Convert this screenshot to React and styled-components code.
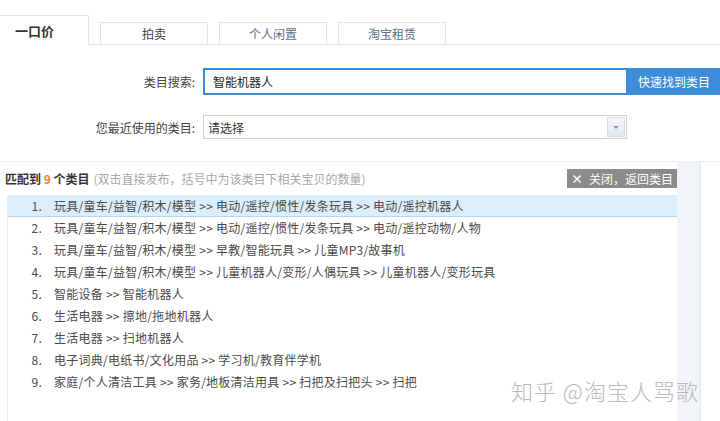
import React from "react";
import styled, { createGlobalStyle } from "styled-components";

const GlobalStyle = createGlobalStyle`
    body {
        margin: 0;
        background: #fff;
        font-family: "Noto Sans CJK SC", "Microsoft YaHei", sans-serif;
        font-size: 12px;
        color: #333;
    }
`;

const Page = styled.div`
    position: relative;
    width: 720px;
    height: 421px;
    overflow: hidden;
    background: #fff;
`;

const TabBar = styled.div`
    display: flex;
    align-items: flex-end;
    height: 45px;
    border-bottom: 1px solid #e3e3e3;
    box-sizing: border-box;
`;

const Tab = styled.div`
    box-sizing: border-box;
    display: flex;
    align-items: center;
    justify-content: ${p => (p.active ? "flex-start" : "center")};
    width: ${p => (p.active ? "89px" : "108px")};
    height: ${p => (p.active ? "30px" : "23px")};
    margin-left: ${p => (p.active ? "0" : "11px")};
    margin-bottom: -1px;
    padding-left: ${p => (p.active ? "15px" : "0")};
    border: 1px solid #e3e3e3;
    border-left: ${p => (p.active ? "none" : "1px solid #e3e3e3")};
    border-bottom: ${p => (p.active ? "1px solid #fff" : "1px solid #e3e3e3")};
    background: #fff;
    font-size: ${p => (p.active ? "13px" : "12px")};
    font-weight: ${p => (p.active ? "bold" : "normal")};
    color: ${p => p.color || "#333"};
`;

const Form = styled.div`
    display: flex;
    flex-direction: column;
    gap: 20px;
    padding-top: 23px;
    height: 116px;
    box-sizing: border-box;
`;

const Row = styled.div`
    display: flex;
    align-items: center;
`;

const Label = styled.div`
    width: 195px;
    margin-right: 8px;
    text-align: right;
    color: #444;
`;

const SearchInput = styled.div`
    box-sizing: border-box;
    width: 425px;
    height: 27px;
    border: 2px solid #3b8bd6;
    padding-left: 8px;
    display: flex;
    align-items: center;
    color: #222;
`;

const SearchButton = styled.div`
    width: 92px;
    height: 27px;
    background: #3d8ddb;
    color: #fff;
    display: flex;
    align-items: center;
    justify-content: center;
`;

const Select = styled.div`
    box-sizing: border-box;
    width: 424px;
    height: 24px;
    border: 1px solid #cfcfcf;
    padding-left: 4px;
    display: flex;
    align-items: center;
    justify-content: space-between;
    color: #333;
`;

const SelectArrow = styled.div`
    box-sizing: border-box;
    width: 18px;
    height: 20px;
    margin-right: 1px;
    border: 1px solid #d6dde6;
    background: linear-gradient(#f4f7fa, #dde5ee);
    display: flex;
    align-items: center;
    justify-content: center;
    &::after {
        content: "";
        border-left: 3px solid transparent;
        border-right: 3px solid transparent;
        border-top: 3px solid #8a9bb0;
    }
`;

const Results = styled.div`
    display: flex;
    border-top: 1px solid #edf0f4;
    height: 260px;
`;

const ResultMain = styled.div`
    width: 677px;
    display: flex;
    flex-direction: column;
`;

const SideStrip = styled.div`
    width: 23px;
    background: #f1f5fa;
    border-right: 1px solid #dfe6ef;
`;

const ResultHeader = styled.div`
    display: flex;
    align-items: center;
    justify-content: space-between;
    height: 33px;
    padding-left: 5px;
`;

const Strong = styled.span`
    font-weight: bold;
    color: ${p => p.color || "#333"};
`;

const Hint = styled.span`
    color: #a8a8a8;
    margin-left: 4px;
`;

const CloseButton = styled.div`
    width: 110px;
    height: 19px;
    background: #8b8b8b;
    color: #fff;
    display: flex;
    align-items: center;
    justify-content: center;
    gap: 6px;
    font-size: 12px;
`;

const List = styled.div`
    margin-left: 7px;
    border-left: 1px solid #e6edf4;
    flex: 1;
`;

const Item = styled.div`
    display: flex;
    align-items: center;
    height: 22px;
    box-sizing: border-box;
    background: ${p => (p.active ? "#dcedfb" : "transparent")};
    border-bottom: 1px solid ${p => (p.active ? "#b9d5ee" : "transparent")};
    color: #4a4a4a;
    letter-spacing: 0.25px;
`;

const Num = styled.span`
    width: 34px;
    margin-right: 12px;
    text-align: right;
`;

const Watermark = styled.div`
    position: absolute;
    left: 511px;
    top: 374px;
    font-size: 22px;
    font-weight: 300;
    color: #bababa;
    letter-spacing: 1px;
`;

const items = [
    "玩具/童车/益智/积木/模型 >> 电动/遥控/惯性/发条玩具 >> 电动/遥控机器人",
    "玩具/童车/益智/积木/模型 >> 电动/遥控/惯性/发条玩具 >> 电动/遥控动物/人物",
    "玩具/童车/益智/积木/模型 >> 早教/智能玩具 >> 儿童MP3/故事机",
    "玩具/童车/益智/积木/模型 >> 儿童机器人/变形/人偶玩具 >> 儿童机器人/变形玩具",
    "智能设备 >> 智能机器人",
    "生活电器 >> 擦地/拖地机器人",
    "生活电器 >> 扫地机器人",
    "电子词典/电纸书/文化用品 >> 学习机/教育伴学机",
    "家庭/个人清洁工具 >> 家务/地板清洁用具 >> 扫把及扫把头 >> 扫把",
];

export default function App() {
    return (
        <Page>
            <GlobalStyle />
            <TabBar>
                <Tab active>一口价</Tab>
                <Tab color="#444">拍卖</Tab>
                <Tab color="#5a6f8a">个人闲置</Tab>
                <Tab color="#5a6f8a">淘宝租赁</Tab>
            </TabBar>
            <Form>
                <Row>
                    <Label>类目搜索:</Label>
                    <SearchInput>智能机器人</SearchInput>
                    <SearchButton>快速找到类目</SearchButton>
                </Row>
                <Row>
                    <Label>您最近使用的类目:</Label>
                    <Select>
                        请选择
                        <SelectArrow />
                    </Select>
                </Row>
            </Form>
            <Results>
                <ResultMain>
                    <ResultHeader>
                        <div>
                            <Strong>匹配到 </Strong>
                            <Strong color="#f0802a">9</Strong>
                            <Strong> 个类目</Strong>
                            <Hint>(双击直接发布，括号中为该类目下相关宝贝的数量)</Hint>
                        </div>
                        <CloseButton>
                            <Strong color="#fff">×</Strong>
                            关闭，返回类目
                        </CloseButton>
                    </ResultHeader>
                    <List>
                        {items.map((text, i) => (
                            <Item key={i} active={i === 0}>
                                <Num>{i + 1}.</Num>
                                {text}
                            </Item>
                        ))}
                    </List>
                </ResultMain>
                <SideStrip />
            </Results>
            <Watermark>知乎 @淘宝人骂歌</Watermark>
        </Page>
    );
}
